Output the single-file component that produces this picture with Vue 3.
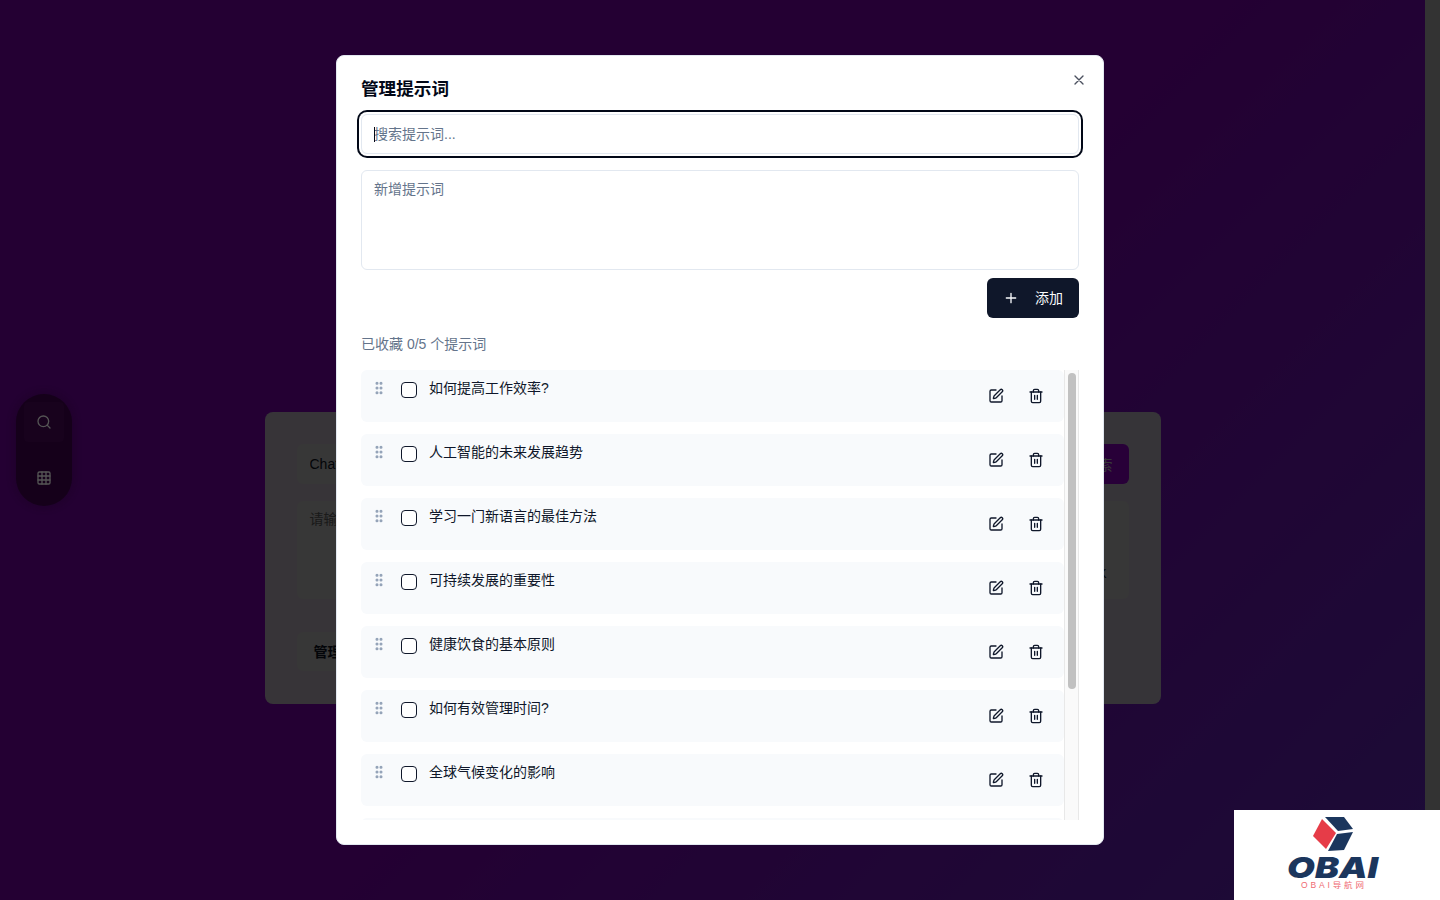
<script setup>
import { ref, onMounted } from 'vue';

const searchInput = ref(null);

const prompts = [
  '如何提高工作效率?',
  '人工智能的未来发展趋势',
  '学习一门新语言的最佳方法',
  '可持续发展的重要性',
  '健康饮食的基本原则',
  '如何有效管理时间?',
  '全球气候变化的影响',
  '如何培养良好的阅读习惯',
  '远程办公的优势与挑战',
  '数字时代的隐私保护'
];

onMounted(() => {
  searchInput.value.focus();
});
</script>

<template>
  <div class="page">
    <main class="main">
      <section class="card">
        <div class="search-row">
          <input class="field" type="text" value="ChatGPT" />
          <button class="search-btn">搜索</button>
        </div>
        <div class="prompt-box">
          <textarea class="field prompt-area" placeholder="请输入提示词"></textarea>
          <span class="prompt-hint">⌘K</span>
        </div>
        <button class="manage-btn">管理提示词</button>
      </section>
    </main>
    <div class="page-scrollbar"></div>
  </div>

  <!-- floating tool pill -->
  <nav class="pill">
    <button class="pill-btn active">
      <svg viewBox="0 0 24 24" class="icon"><circle cx="11" cy="11" r="8" /><path d="m21 21-4.3-4.3" /></svg>
    </button>
    <button class="pill-btn">
      <svg viewBox="0 0 24 24" class="icon">
        <rect width="18" height="18" x="3" y="3" rx="2" />
        <path d="M3 9h18M3 15h18M9 3v18M15 3v18" />
      </svg>
    </button>
  </nav>

  <div class="overlay"></div>

  <div class="modal">
    <button class="close-btn" aria-label="关闭">
      <svg viewBox="0 0 24 24" class="icon"><path d="M18 6 6 18M6 6l12 12" /></svg>
    </button>
    <h2 class="title">管理提示词</h2>
    <input ref="searchInput" class="modal-search" type="text" placeholder="搜索提示词..." />
    <span class="caret"></span>
    <textarea class="modal-new" placeholder="新增提示词"></textarea>
    <div class="add-row">
      <button class="add-btn">
        <svg viewBox="0 0 24 24" class="icon"><path d="M5 12h14M12 5v14" /></svg>
        <span class="add-label">添加</span>
      </button>
    </div>
    <p class="count">已收藏 0/5 个提示词</p>
    <div class="list-wrap">
      <div class="list">
        <div v-for="text in prompts" :key="text" class="item">
          <svg viewBox="0 0 24 24" class="icon grip">
            <circle cx="9" cy="5" r="1.3" /><circle cx="9" cy="12" r="1.3" /><circle cx="9" cy="19" r="1.3" />
            <circle cx="15" cy="5" r="1.3" /><circle cx="15" cy="12" r="1.3" /><circle cx="15" cy="19" r="1.3" />
          </svg>
          <span class="check"></span>
          <span class="item-text">{{ text }}</span>
          <button class="item-btn">
            <svg viewBox="0 0 24 24" class="icon">
              <path d="M12 3H5a2 2 0 0 0-2 2v14a2 2 0 0 0 2 2h14a2 2 0 0 0 2-2v-7" />
              <path d="M18.375 2.625a1 1 0 0 1 3 3l-9.013 9.014a2 2 0 0 1-.853.505l-2.873.84a.5.5 0 0 1-.62-.62l.84-2.873a2 2 0 0 1 .506-.852z" />
            </svg>
          </button>
          <button class="item-btn">
            <svg viewBox="0 0 24 24" class="icon">
              <path d="M3 6h18" />
              <path d="M19 6v14c0 1-1 2-2 2H7c-1 0-2-1-2-2V6" />
              <path d="M8 6V4c0-1 1-2 2-2h4c1 0 2 1 2 2v2" />
              <path d="M10 11v6M14 11v6" />
            </svg>
          </button>
        </div>
      </div>
      <div class="list-scrollbar"><div class="list-thumb"></div></div>
    </div>
  </div>

  <!-- site logo -->
  <div class="logo">
    <svg width="206" height="90" viewBox="0 0 206 90">
      <polygon points="88,9 102,23 92,39 79,26" fill="#e63c48" />
      <polygon points="91,7 110,7 119,19 104,21" fill="#1b365d" />
      <polygon points="103,24 119,22 110,40 94,41" fill="#1b365d" />
      <text x="53" y="68" textLength="91" lengthAdjust="spacingAndGlyphs" class="logo-main">OBAI</text>
      <text x="67" y="78" textLength="63" class="logo-sub">OBAI导航网</text>
    </svg>
  </div>
</template>

<style>
html,
body {
  margin: 0;
  overflow: hidden;
}
</style>

<style scoped>
.page {
  display: flex;
  height: 900px;
  font-family: "Liberation Sans", "Noto Sans CJK SC", sans-serif;
  font-size: 14px;
  background: linear-gradient(135deg, #a400e6 0%, #a400e6 50%, #7f37fa 100%);
}

.main {
  flex: 1;
  padding-top: 412px;
}

.page-scrollbar {
  width: 15px;
  background: #e8e8e8;
}

.card {
  width: 896px;
  height: 292px;
  box-sizing: border-box;
  margin: 0 auto;
  padding: 32px;
  background: rgba(255, 255, 255, 0.92);
  border-radius: 8px;
}

.search-row {
  display: flex;
  gap: 16px;
}

.field {
  flex: 1;
  height: 40px;
  box-sizing: border-box;
  padding: 0 13px;
  border: 0;
  border-radius: 6px;
  background: #f8f8f8;
  font: inherit;
  color: #0f172a;
}

.search-btn {
  width: 69px;
  height: 40px;
  border: 0;
  border-radius: 6px;
  background: #b400ff;
  color: #fff;
  font: inherit;
  text-align: right;
  padding-right: 16px;
}

.prompt-box {
  position: relative;
  margin-top: 17px;
}

.prompt-area {
  display: block;
  width: 100%;
  height: 98px;
  padding: 7px 13px;
  resize: none;
}

.prompt-hint {
  position: absolute;
  right: 22px;
  bottom: 18px;
  font-size: 12px;
  color: #0f172a;
}

.manage-btn {
  display: block;
  height: 39px;
  margin-top: 33px;
  padding: 0 17px 2px;
  border: 0;
  border-radius: 6px;
  background: #f8f8f8;
  color: #0f172a;
  font: inherit;
  font-weight: 600;
}

.pill {
  position: fixed;
  left: 16px;
  top: 394px;
  width: 56px;
  height: 112px;
  box-sizing: border-box;
  padding: 8px;
  display: flex;
  flex-direction: column;
  gap: 16px;
  border-radius: 28px;
  background: #15001a;
  box-shadow: 0 0 12px rgba(20, 0, 25, 0.5);
  z-index: 2;
}

.pill-btn {
  height: 40px;
  flex: none;
  display: flex;
  align-items: center;
  justify-content: center;
  padding: 0;
  border: 0;
  border-radius: 4px;
  background: transparent;
  color: #555;
}

.pill-btn.active {
  background: #18021d;
}

.icon {
  width: 16px;
  height: 16px;
  flex: none;
  fill: none;
  stroke: currentColor;
  stroke-width: 2;
  stroke-linecap: round;
  stroke-linejoin: round;
}

.overlay {
  position: fixed;
  inset: 0;
  background: rgba(0, 0, 0, 0.78);
  z-index: 1;
}

.modal {
  position: fixed;
  left: 336px;
  top: 55px;
  width: 768px;
  height: 790px;
  box-sizing: border-box;
  padding: 24px;
  display: flex;
  flex-direction: column;
  background: #fff;
  border: 1px solid #e2e8f0;
  border-radius: 8px;
  font-family: "Liberation Sans", "Noto Sans CJK SC", sans-serif;
  font-size: 14px;
  color: #0f172a;
  z-index: 3;
}

.close-btn {
  position: absolute;
  top: 16px;
  right: 16px;
  display: flex;
  padding: 0;
  border: 0;
  background: none;
  color: #0f172a;
  opacity: 0.75;
}

.title {
  margin: 0;
  height: 18px;
  line-height: 18px;
  font-size: 17.6px;
  font-weight: 600;
  color: #020817;
}

.modal-search {
  flex: none;
  height: 40px;
  box-sizing: border-box;
  margin-top: 16px;
  padding: 0 12px;
  border: 1px solid #e2e8f0;
  border-radius: 6px;
  font: inherit;
  outline: none;
  caret-color: transparent;
  box-shadow: 0 0 0 2px #fff, 0 0 0 4px #020817;
}

/* text cursor resting in the focused search field */
.caret {
  position: absolute;
  left: 37px;
  top: 71px;
  width: 1px;
  height: 15px;
  background: #020817;
}

.modal-new {
  flex: none;
  height: 100px;
  box-sizing: border-box;
  margin-top: 16px;
  padding: 7px 12px;
  border: 1px solid #e2e8f0;
  border-radius: 6px;
  font: inherit;
  resize: none;
  outline: none;
}

.modal-search::placeholder,
.modal-new::placeholder {
  color: #64748b;
  opacity: 1;
}

.add-row {
  display: flex;
  justify-content: flex-end;
  margin-top: 8px;
}

.add-btn {
  height: 40px;
  display: flex;
  align-items: center;
  gap: 16px;
  padding: 0 16px;
  border: 0;
  border-radius: 6px;
  background: #0f172a;
  color: #f8fafc;
  font: inherit;
}

.add-label {
  margin-bottom: 2px;
}

.count {
  margin: 16px 0;
  line-height: 20px;
  color: #64748b;
}

.list-wrap {
  flex: none;
  height: 450px;
  display: flex;
}

.list {
  flex: 1;
  overflow: hidden;
  display: flex;
  flex-direction: column;
  gap: 12px;
}

.list-scrollbar {
  flex: none;
  width: 15px;
  box-sizing: border-box;
  padding: 3px 2px 0 3px;
  background: #fafafa;
  border-left: 1px solid #e8e8e8;
  border-right: 1px solid #e8e8e8;
}

.list-thumb {
  height: 316px;
  background: #c1c1c1;
  border-radius: 4px;
}

.item {
  flex: none;
  height: 52px;
  box-sizing: border-box;
  display: flex;
  align-items: flex-start;
  padding: 0 8px 0 10px;
  background: #f8fafc;
  border-radius: 6px;
}

.grip {
  margin-top: 10px;
  color: #94a3b8;
  fill: currentColor;
}

.check {
  flex: none;
  width: 16px;
  height: 16px;
  box-sizing: border-box;
  margin: 12px 12px 0 14px;
  border: 1px solid #0f172a;
  border-radius: 4px;
  background: #fff;
}

.item-text {
  flex: 1;
  margin-top: 8px;
  line-height: 20px;
}

.item-btn {
  flex: none;
  width: 40px;
  height: 40px;
  margin-top: 6px;
  display: flex;
  align-items: center;
  justify-content: center;
  padding: 0;
  border: 0;
  background: none;
  color: #0f172a;
}

.logo {
  position: fixed;
  right: 0;
  bottom: 0;
  width: 206px;
  height: 90px;
  background: #fff;
  z-index: 4;
}

.logo svg {
  display: block;
}

.logo-main {
  font-family: Inter, sans-serif;
  font-size: 29px;
  font-weight: 900;
  font-style: italic;
  fill: #1b365d;
}

.logo-sub {
  font-family: "Liberation Sans", "Noto Sans CJK SC", sans-serif;
  font-size: 8.5px;
  fill: #ef6a72;
}
</style>
